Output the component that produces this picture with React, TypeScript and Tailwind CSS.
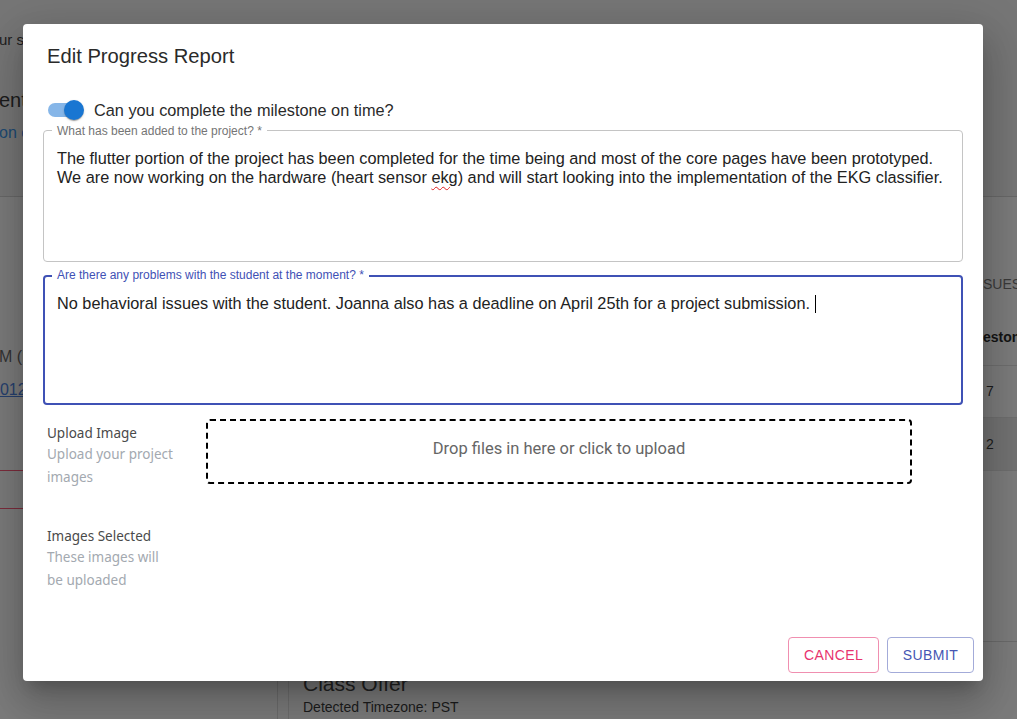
import React from "react";

function Switch() {
  return (
    <div className="relative w-[40px] h-[24px] flex items-center shrink-0">
      <div className="ml-[5px] w-[34px] h-[14px] rounded-full bg-[#86b6e8]" />
      <div className="absolute left-[21px] top-[2px] w-[20px] h-[20px] rounded-full bg-[#1976d2] shadow-[0_2px_1px_-1px_rgba(0,0,0,0.2),0_1px_1px_0_rgba(0,0,0,0.14),0_1px_3px_0_rgba(0,0,0,0.12)]" />
    </div>
  );
}

export default function App() {
  return (
    <div className="relative w-[1017px] h-[719px] overflow-hidden bg-[#7b7b7b] font-['Liberation_Sans',Arial,sans-serif]">
      {/* background page (dimmed) */}
      <div className="h-[197px] bg-[#767676] border-b border-[#686868] pt-[30px]">
        <p className="text-[15px] leading-[20px] text-[#1e1e1e] whitespace-nowrap -ml-[1px]">ur schedule</p>
        <p className="mt-[35px] text-[20px] leading-[30px] text-[#1c1c1c] whitespace-nowrap -ml-[1px]">ents</p>
        <p className="mt-[8px] text-[16px] leading-[20px] text-[#1d4a73] whitespace-nowrap -ml-[1px]">on of</p>
      </div>
      <div className="flex h-[522px]">
        <div className="w-[278px] border-r border-[#6c6c6c] pt-[150px]">
          <p className="text-[16px] leading-[20px] text-[#333] whitespace-nowrap -ml-[1px]">M (PST)</p>
          <p className="mt-[13px] text-[16px] leading-[20px] text-[#26406e] underline whitespace-nowrap -ml-[9px]">2012</p>
          <div className="mt-[70px] h-[1px] bg-[#7c2c3c]" />
          <div className="mt-[37px] h-[1px] bg-[#7c2c3c]" />
        </div>
        <div className="flex-1 flex flex-col justify-end pl-[10px]">
          <div className="border-l border-t border-[#6e6e6e] px-[14px] pt-[2px] h-[50px]">
            <p className="text-[21px] leading-[24px] text-[#222]">Class Offer</p>
            <p className="mt-[1px] text-[14px] leading-[20px] text-[#1c1c1c]">Detected Timezone: PST</p>
          </div>
        </div>
        <div className="w-[34px] flex flex-col">
          <p className="mt-[78px] text-[14px] leading-[18px] text-[#3a3a3a] whitespace-nowrap">SUES</p>
          <p className="mt-[35px] text-[14px] leading-[18px] font-bold text-[#141414] whitespace-nowrap">estone</p>
          <div className="mt-[19px] h-[1px] bg-[#6e6e6e]" />
          <div className="h-[51px] flex items-center pl-[3px] text-[14px] text-[#1c1c1c]">7</div>
          <div className="h-[1px] bg-[#6e6e6e]" />
          <div className="h-[52px] flex items-center pl-[3px] text-[14px] text-[#1c1c1c] bg-[#727272]">2</div>
          <div className="h-[1px] bg-[#6e6e6e]" />
          <div className="mt-[170px] h-[1px] bg-[#6a6a6a]" />
        </div>
      </div>

      {/* dialog */}
      <div className="absolute left-[23px] top-[24px] w-[960px] h-[657px] bg-white rounded-[4px] flex flex-col shadow-[0_11px_15px_-7px_rgba(0,0,0,0.2),0_24px_38px_3px_rgba(0,0,0,0.14),0_9px_46px_8px_rgba(0,0,0,0.12)]">
        <h2 className="px-[24px] pt-[16px] pb-[16px] text-[20.2px] leading-[32px] text-[#2a2a2a]">Edit Progress Report</h2>
        <div className="px-[20px]">
          <div className="mt-[8px] h-[28px] flex items-center gap-[11px]">
            <Switch />
            <span className="text-[16.3px] leading-[20px] text-[#2a2a2a]">Can you complete the milestone on time?</span>
          </div>

          <div className="relative mt-[6px] h-[132px] border border-[#c4c4c4] rounded-[4px] px-[13px] pt-[17.5px]">
            <span className="absolute -top-[7px] left-[8px] px-[5px] bg-white text-[12px] leading-[14px] text-[#757575]">What has been added to the project? *</span>
            <p className="text-[16.3px] leading-[19px] text-[#222]">
              The flutter portion of the project has been completed for the time being and most of the core pages have been prototyped.
              <br />
              We are now working on the hardware (heart sensor{" "}
              <span className="underline decoration-wavy decoration-[#e02020] decoration-1 underline-offset-[3px]">ekg</span>) and will start looking into the implementation of the EKG classifier.
            </p>
          </div>

          <div className="relative mt-[13px] h-[130px] border-2 border-[#3f51b5] rounded-[4px] px-[12px] pt-[16.5px]">
            <span className="absolute -top-[9px] left-[7px] px-[5px] bg-white text-[12px] leading-[14px] text-[#3f51b5]">Are there any problems with the student at the moment? *</span>
            <p className="text-[16.3px] leading-[19px] text-[#222]">
              No behavioral issues with the student. Joanna also has a deadline on April 25th for a project submission.{" "}
              <span className="inline-block w-[1px] h-[18px] bg-black align-[-4px]" />
            </p>
          </div>

          <div className="mt-[14px] flex gap-[31px] pl-[4px] font-['Noto_Sans','Open_Sans',sans-serif]">
            <div className="w-[128px] shrink-0 pt-[4px]">
              <p className="text-[13.5px] leading-[20px] text-[#4a4a4a]">Upload Image</p>
              <p className="text-[13.5px] leading-[23px] text-[#a3a9b0]">Upload your project images</p>
            </div>
            <div className="w-[706px] h-[65px] border-2 border-dashed border-black rounded-[4px] flex items-center justify-center pb-[5px] font-['Roboto',sans-serif] text-[16.5px] text-[#666]">
              Drop files in here or click to upload
            </div>
          </div>

          <div className="mt-[37px] pl-[4px] font-['Noto_Sans','Open_Sans',sans-serif]">
            <div className="w-[128px]">
              <p className="text-[13.5px] leading-[20px] text-[#4a4a4a]">Images Selected</p>
              <p className="text-[13.5px] leading-[23px] text-[#a3a9b0]">These images will be uploaded</p>
            </div>
          </div>
        </div>

        <div className="mt-auto flex justify-end gap-[8px] pr-[9px] pb-[8px]">
          <button className="w-[91px] h-[36px] rounded-[4px] border border-[#f08fb0] text-[#e8336e] text-[14px] tracking-[0.4px]">CANCEL</button>
          <button className="w-[87px] h-[36px] rounded-[4px] border border-[#a3abd9] text-[#4656b3] text-[14px] tracking-[0.4px]">SUBMIT</button>
        </div>
      </div>
    </div>
  );
}
